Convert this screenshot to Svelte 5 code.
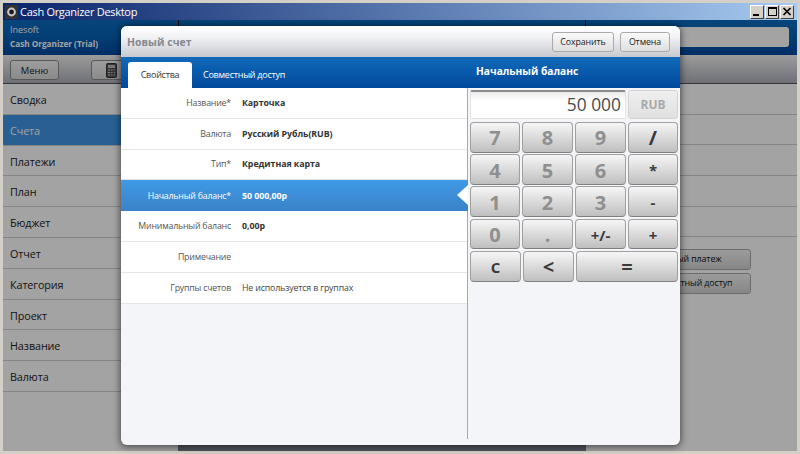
<script>
  const nav = ['Сводка', 'Счета', 'Платежи', 'План', 'Бюджет', 'Отчет', 'Категория', 'Проект', 'Название', 'Валюта'];
  const rows = [
    { label: 'Название*', value: 'Карточка', bold: true },
    { label: 'Валюта', value: 'Русский Рубль(RUB)', bold: true },
    { label: 'Тип*', value: 'Кредитная карта', bold: true },
    { label: 'Начальный баланс*', value: '50 000,00р', bold: true, active: true },
    { label: 'Минимальный баланс', value: '0,00р', bold: true },
    { label: 'Примечание', value: '' },
    { label: 'Группы счетов', value: 'Не используется в группах' }
  ];
  const keys = [
    { t: '7' }, { t: '8' }, { t: '9' }, { t: '/', op: true },
    { t: '4' }, { t: '5' }, { t: '6' }, { t: '*', op: true, small: true },
    { t: '1' }, { t: '2' }, { t: '3' }, { t: '-', op: true, small: true },
    { t: '0' }, { t: '.' }, { t: '+/-', op: true, small: true }, { t: '+', op: true, small: true }
  ];
</script>

<div class="window">
  <div class="titlebar">
    <svg class="appicon" width="13" height="14" viewBox="0 0 13 14">
      <rect width="13" height="14" rx="1" fill="#333" />
      <circle cx="6.5" cy="7" r="4.4" fill="#c8c8c8" />
      <circle cx="6.5" cy="7" r="2.4" fill="#1c1c1c" />
    </svg>
    <span class="apptitle">Cash Organizer Desktop</span>
    <div class="winbtns">
      <span class="winbtn"><i class="min"></i></span>
      <span class="winbtn"><i class="max"></i></span>
      <span class="winbtn">
        <svg width="10" height="9" viewBox="0 0 10 9"><path d="M1.5 1 L8.5 8 M8.5 1 L1.5 8" stroke="#000" stroke-width="1.7" /></svg>
      </span>
    </div>
  </div>

  <div class="app">
    <header class="apphead">
      <div class="brand">
        <div class="company">Inesoft</div>
        <div class="product">Cash Organizer (Trial)</div>
      </div>
      <div class="headmid"></div>
      <div class="headright"><div class="search"></div></div>
    </header>

    <div class="toolbar">
      <button class="tool menu">Меню</button>
      <button class="tool calc" aria-label="Калькулятор">
        <svg width="11" height="15" viewBox="0 0 11 15">
          <rect x="0.5" y="0.5" width="10" height="14" rx="1" fill="#555" stroke="#333" />
          <rect x="2" y="2" width="7" height="3" fill="#bbb" />
          <path d="M2 7h2M5 7h1.500M8 7h1M2 9.500h2M5 9.500h1.500M8 9.500h1M2 12h2M5 12h1.500M8 12h1" stroke="#ccc" stroke-width="1.200" />
        </svg>
      </button>
    </div>

    <div class="content">
      <nav class="sidebar">
        {#each nav as item, i}
          <div class="navitem" class:current={i === 1}>{item}</div>
        {/each}
      </nav>
      <main class="center"></main>
      <aside class="details">
        <div class="detailrow"></div>
        <div class="detailrow"></div>
        <div class="detailrow"></div>
        <div class="detailrow"></div>
        <div class="detailrow"></div>
        <div class="actions">
          <button class="action">Новый платеж</button>
          <button class="action">Совместный доступ</button>
        </div>
      </aside>
    </div>

    <div class="overlay"></div>

    <section class="dialog">
      <div class="dlghead">
        <h1>Новый счет</h1>
        <div class="dlgbtns">
          <button class="dlgbtn save">Сохранить</button>
          <button class="dlgbtn cancel">Отмена</button>
        </div>
      </div>
      <div class="dlgbar">
        <div class="tabs">
          <span class="tab on">Свойства</span>
          <span class="tab">Совместный доступ</span>
        </div>
        <div class="bartitle">Начальный баланс</div>
      </div>
      <div class="dlgbody">
        <div class="form">
          {#each rows as r}
            <div class="row" class:active={r.active}>
              <span class="lbl">{r.label}</span>
              <span class="val" class:strong={r.bold}>{r.value}</span>
              {#if r.active}<span class="pointer"></span>{/if}
            </div>
          {/each}
        </div>
        <div class="calcpane">
          <div class="displayrow">
            <div class="display">50 000</div>
            <button class="currency">RUB</button>
          </div>
          <div class="keys">
            {#each keys as k}
              <button class="key" class:op={k.op} class:small={k.small}>{k.t}</button>
            {/each}
          </div>
          <div class="keys last">
            <button class="key op small">C</button>
            <button class="key op">&lt;</button>
            <button class="key op">=</button>
          </div>
        </div>
      </div>
    </section>
  </div>
</div>

<style>
  :global(body) { margin: 0; background: #d4d0c8; }
  button { font-family: inherit; padding: 0; margin: 0; }
  h1 { margin: 0; }

  .window {
    width: 800px;
    height: 454px;
    box-sizing: border-box;
    padding: 3px;
    background: #d4d0c8;
    display: flex;
    flex-direction: column;
    font-family: "Open Sans", "Noto Sans", sans-serif;
    overflow: hidden;
  }

  .titlebar {
    height: 17px;
    flex: none;
    display: flex;
    align-items: center;
    background: linear-gradient(90deg, #0a246a, #a6caf0);
    padding: 0 3px 0 2px;
  }
  .appicon { flex: none; }
  .apptitle { color: #fff; font-size: 11px; letter-spacing: -0.3px; margin-left: 2px; }
  .winbtns { margin-left: auto; display: flex; gap: 1px; }
  .winbtn {
    width: 14px;
    height: 14px;
    box-sizing: border-box;
    background: #d4d0c8;
    border: 1px solid;
    border-color: #fff #404040 #404040 #fff;
    display: flex;
    align-items: center;
    justify-content: center;
  }
  .min { width: 6px; height: 2px; background: #000; margin-top: 7px; margin-right: 2px; }
  .max { width: 9px; height: 9px; box-sizing: border-box; border: 1px solid #000; border-top-width: 2px; }

  .app {
    flex: 1;
    position: relative;
    display: flex;
    flex-direction: column;
    min-height: 0;
  }

  .apphead {
    height: 35px;
    flex: none;
    display: grid;
    grid-template-columns: 175px 408px 1fr;
    background: linear-gradient(#0a6cc0, #0662b6 50%, #0348a0);
  }
  .brand { padding: 3px 7px; }
  .company { font-size: 9px; line-height: 14px; color: #fff; }
  .product { font-size: 8.2px; line-height: 13px; color: #fff; font-weight: 700; }
  .headmid { border-left: 1px solid #000; border-right: 1px solid #000; }
  .headright { padding: 7px 8px 8px 4px; }
  .search { height: 20px; background: #fff; border-radius: 3px; }

  .toolbar {
    height: 29px;
    flex: none;
    box-sizing: border-box;
    padding: 5px 7px 0;
    display: flex;
    gap: 32px;
    background: linear-gradient(#f4f4f4, #aeb0bb);
    border-bottom: 1px solid #555;
    align-items: flex-start;
  }
  .tool {
    height: 20px;
    box-sizing: border-box;
    border: 1px solid #8a8a8a;
    border-radius: 3px;
    background: linear-gradient(#f6f6f6, #d8d8d8);
    font-size: 9.4px;
    color: #222;
  }
  .menu { width: 49px; }
  .calc { width: 40px; display: flex; align-items: center; justify-content: center; }

  .content {
    flex: 1;
    min-height: 0;
    display: grid;
    grid-template-columns: 175px 408px 1fr;
  }
  .sidebar, .details { background: #fff; }
  .navitem {
    height: 30.8px;
    box-sizing: border-box;
    border-bottom: 1px solid #d0d0d0;
    padding-left: 7px;
    font-size: 10.8px;
    letter-spacing: -0.1px;
    line-height: 31px;
    color: #222;
  }
  .navitem.current { background: #4196e6; color: #fff; }
  .center { background: #7c808e; }
  .detailrow { height: 30.7px; box-sizing: border-box; border-bottom: 1px solid #d0d0d0; }
  .actions {
    display: flex;
    flex-direction: column;
    align-items: flex-end;
    gap: 3px;
    padding: 11.5px 46px 0 0;
  }
  .action {
    width: 120px;
    height: 21px;
    box-sizing: border-box;
    border: 1px solid #a8a8a8;
    border-radius: 3px;
    background: linear-gradient(#f2f2f2, #d4d4d4);
    color: #111;
    font-size: 8.8px;
    letter-spacing: -0.1px;
    text-align: center;
  }

  .overlay { position: absolute; inset: 0; background: rgba(0, 0, 0, 0.36); }

  .dialog {
    position: absolute;
    left: 118px;
    top: 6px;
    width: 559px;
    height: 419px;
    border-radius: 6px;
    overflow: hidden;
    background: #f3f5f8;
    box-shadow: 0 1px 7px 1px rgba(0, 0, 0, 0.55);
    display: flex;
    flex-direction: column;
  }
  .dlghead {
    height: 31px;
    flex: none;
    display: flex;
    align-items: center;
    justify-content: space-between;
    padding: 0 10px 0 6px;
    background: linear-gradient(#fff, #f2f3f5 35%, #c6c9d0);
  }
  h1 { font-size: 10.4px; font-weight: 700; color: #85888e; letter-spacing: 0.05px; }
  .dlgbtns { display: flex; gap: 6px; }
  .dlgbtn {
    height: 20px;
    box-sizing: border-box;
    border: 1px solid #aaa;
    border-radius: 3px;
    background: linear-gradient(#fafafa, #dedede);
    color: #222;
    font-size: 8.8px;
    letter-spacing: -0.1px;
  }
  .save { width: 62px; }
  .cancel { width: 50px; }

  .dlgbar {
    height: 31px;
    flex: none;
    display: flex;
    background: linear-gradient(#116ab9, #00489c);
  }
  .tabs {
    width: 347px;
    flex: none;
    display: flex;
    align-items: flex-end;
    padding-left: 7px;
    gap: 11px;
    box-sizing: border-box;
  }
  .tab {
    font-size: 9px;
    letter-spacing: -0.25px;
    color: #fff;
    font-weight: 500;
    height: 26px;
    line-height: 25px;
  }
  .tab.on {
    width: 64px;
    background: #fff;
    color: #333;
    border-radius: 3px 3px 0 0;
    text-align: center;
    font-weight: 400;
  }
  .bartitle { font-size: 10.2px; font-weight: 700; color: #fff; line-height: 29px; padding-left: 8px; }

  .dlgbody { flex: 1; display: flex; min-height: 0; padding-bottom: 6px; }
  .form { width: 347px; flex: none; box-sizing: border-box; border-right: 1px solid #a9a9a9; }
  .row {
    height: 30.8px;
    box-sizing: border-box;
    background: #fff;
    border-bottom: 1px solid #e6e6e6;
    display: flex;
    align-items: center;
    position: relative;
    font-size: 8.8px;
    color: #555;
  }
  .row.active {
    background: linear-gradient(#3f9ae6, #3b82c8);
    color: #fff;
    border-bottom: 0;
    margin-right: -1px;
  }
  .lbl { width: 110px; text-align: right; flex: none; letter-spacing: -0.2px; }
  .val { margin-left: 11px; color: #444; letter-spacing: -0.15px; }
  .val.strong { font-weight: 700; color: #333; letter-spacing: -0.05px; }
  .active .lbl { color: #fff; }
  .active .val { color: #fff; }
  .pointer {
    position: absolute;
    right: 0;
    top: 5px;
    width: 0;
    height: 0;
    border-style: solid;
    border-width: 10px 11px 10px 0;
    border-color: transparent #fff transparent transparent;
  }

  .calcpane { flex: 1; padding: 2px 2px 0 2px; }
  .displayrow { display: flex; gap: 2px; height: 29px; margin-bottom: 3px; }
  .display {
    flex: 1;
    box-sizing: border-box;
    border: 1px solid #e2e2e2;
    border-top: 2px solid #8a8a8a;
    background: linear-gradient(#eaeaea, #fff 35%, #fff);
    border-radius: 2px;
    text-align: right;
    font-size: 17.4px;
    line-height: 25px;
    padding-right: 4px;
    color: #4a4a4a;
  }
  .currency {
    width: 50px;
    flex: none;
    box-sizing: border-box;
    border: 1px solid #d4d4d4;
    border-radius: 3px;
    background: linear-gradient(#efefef, #e0e0e0);
    color: #a9a9a9;
    font-weight: 700;
    font-size: 12px;
  }
  .keys {
    display: grid;
    grid-template-columns: 50px 51px 51px 50px;
    grid-auto-rows: 30.9px;
    gap: 1.3px 2px;
  }
  .keys.last { grid-template-columns: 51px 51px 102px; margin-top: 1.3px; }
  .key {
    box-sizing: border-box;
    border: 1px solid #a0a0a0;
    border-bottom-color: #808080;
    border-radius: 4px;
    background: linear-gradient(#f6f6f6, #d8d8d8 55%, #bfbfbf);
    color: #8f8f8f;
    font-weight: 700;
    font-size: 20px;
    line-height: 1;
    padding-top: 2px;
  }
  .key.op { color: #3a3a3a; }
  .key.small { font-size: 15px; }
</style>
